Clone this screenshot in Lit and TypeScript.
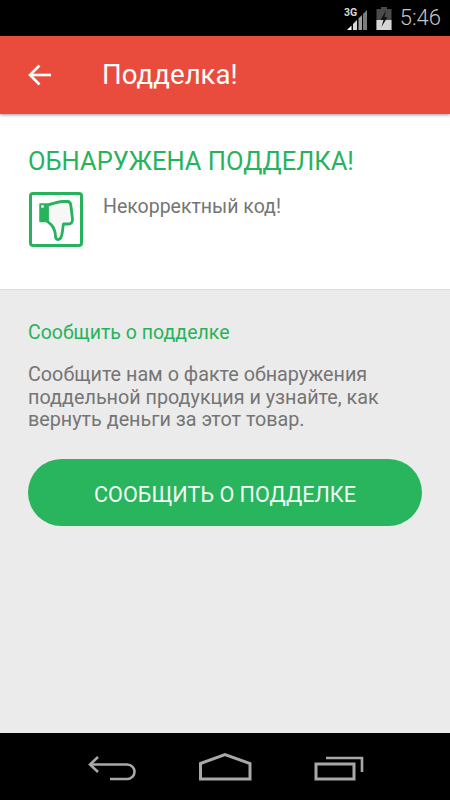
import { LitElement, html, css } from "lit";
import { customElement } from "lit/decorators.js";

@customElement("app-root")
export class AppRoot extends LitElement {
  static styles = css`
    :host {
      display: flex;
      flex-direction: column;
      width: 450px;
      height: 800px;
      overflow: hidden;
      font-family: Roboto, "Noto Sans", sans-serif;
      background: #ebebeb;
    }
    .status {
      height: 36px;
      background: #000;
      display: flex;
      align-items: center;
      justify-content: flex-end;
      flex: none;
      padding-right: 9px;
      box-sizing: border-box;
    }
    .status svg { display: block; flex: none; }
    .sig { margin-right: 8px; margin-top: -1px; }
    .bat { margin-right: 8px; margin-top: -1px; }
    .clock { color: #c4c4c4; font-size: 22px; line-height: 36px; font-weight: 300; }
    .bar {
      height: 78px;
      background: #e94c3d;
      display: flex;
      align-items: center;
      flex: none;
      box-shadow: 0 1px 3px rgba(0,0,0,.4);
      position: relative;
      z-index: 1;
    }
    .back { margin-left: 27px; margin-right: 50px; display: block; }
    .title { color: #fff; font-size: 27.6px; line-height: 30px; }
    .card {
      height: 175px;
      background: #fff;
      border-bottom: 1px solid #dcdcdc;
      flex: none;
      padding: 0 28px;
    }
    .head {
      color: #27b35b;
      font-size: 25.5px;
      line-height: 28px;
      padding-top: 33px;
      white-space: nowrap;
    }
    .row { display: flex; margin-top: 17px; gap: 20px; padding-left: 1px; }
    .row svg { display: block; flex: none; }
    .msg { color: #757575; font-size: 19.5px; line-height: 22px; margin-top: 4px; margin-left: -1px; }
    .body { flex: 1; padding: 0 28px; }
    .link { color: #27b35b; font-size: 19.5px; line-height: 22px; margin-top: 32px; }
    .text { color: #757575; font-size: 19.75px; line-height: 22.5px; margin-top: 20px; white-space: nowrap; }
    .btn {
      margin-top: 27.5px;
      width: 394px;
      height: 67px;
      border-radius: 34px;
      background: #28b55d;
      color: #f4fbf6;
      font-size: 21.6px;
      display: flex;
      align-items: center;
      justify-content: center;
      box-sizing: border-box;
      padding-top: 4px;
    }
    .nav {
      height: 67px;
      background: #000;
      flex: none;
      box-sizing: border-box;
      padding: 18px 0 0 80px;
    }
    .nav svg { display: block; }
  `;

  render() {
    return html`
      <div class="status">
        <svg class="sig" width="24" height="24" viewBox="0 0 24 24">
          <text x="0" y="9.5" fill="#d8d8d8" font-size="10.5" font-weight="700" font-family="Roboto">3G</text>
          <path d="M3 24 L7.5 19.5 V24 Z" fill="#fff" />
          <path d="M9 18 L13 14 V24 H9 Z" fill="#d8d8d8" />
          <path d="M14.5 12.5 L18 9 V24 H14.5 Z" fill="#a0a0a0" />
          <path d="M19 8 L23 4 V24 H19 Z" fill="#7c7c7c" />
        </svg>
        <svg class="bat" width="16" height="24" viewBox="0 0 16 24">
          <path d="M5 1 H11 V3 H15.5 V24 H0.5 V3 H5 Z" fill="#4a4a4a" />
          <path d="M0.5 14 H15.5 V24 H0.5 Z" fill="#d4d4d4" />
          <path d="M10 4.5 L4.5 14 H7.5 L5.5 21 L11.5 11 H8.5 Z" fill="#111" />
        </svg>
        <div class="clock">5:46</div>
      </div>
      <div class="bar">
        <svg class="back" width="25" height="24" viewBox="0 0 25 24" fill="none" stroke="#fff" stroke-width="2.6">
          <path d="M24 12 H3" />
          <path d="M12.5 2.5 L3 12 L12.5 21.5" />
        </svg>
        <div class="title">Подделка!</div>
      </div>
      <div class="card">
        <div class="head">ОБНАРУЖЕНА ПОДДЕЛКА!</div>
        <div class="row">
          <svg width="55" height="55" viewBox="0 0 55 55">
            <rect x="1.5" y="1.5" width="51" height="52" rx="2.5" fill="#fff" stroke="#27b35b" stroke-width="3" />
            <path d="M11 12 H18 V29.5 H11 Z" fill="#27b35b" stroke="#27b35b" stroke-width="1.5" stroke-linejoin="round" />
            <path d="M18.5 13 C24 12 29 9.5 33 9.5 H38.5 C41 9.5 41.5 11 41.8 13 L43.5 27 C43.8 30 42 32 39.5 32 H34.5 C33.5 36 34 41 32 45.5 C30.5 48.5 27 48 26.5 45 C26.5 39 25 36 22.5 33 L18.5 29.5 Z" fill="#f7f7f7" stroke="#27b35b" stroke-width="2.8" stroke-linejoin="round" />
            <circle cx="13.5" cy="14.5" r="1.4" fill="#fff" />
          </svg>
          <div class="msg">Некорректный код!</div>
        </div>
      </div>
      <div class="body">
        <div class="link">Сообщить о подделке</div>
        <div class="text">Сообщите нам о факте обнаружения<br />поддельной продукция и узнайте, как<br />вернуть деньги за этот товар.</div>
        <div class="btn">СООБЩИТЬ О ПОДДЕЛКЕ</div>
      </div>
      <div class="nav">
        <svg width="290" height="32" viewBox="0 0 290 32" fill="none" stroke="#a8a8a8" stroke-width="2.6">
          <path d="M18 6 L10 13.5 L18 21" />
          <path d="M10 13.5 H47 C57 13.5 57 28 47 28 H30" />
          <path d="M120.5 12.5 L145 3.5 L170 12.5 V28 H120.5 Z" stroke-width="3" />
          <path d="M236 13 H274 V28 H236 Z" stroke-width="3" />
          <path d="M246 7 H282 V21" />
        </svg>
      </div>
    `;
  }
}
